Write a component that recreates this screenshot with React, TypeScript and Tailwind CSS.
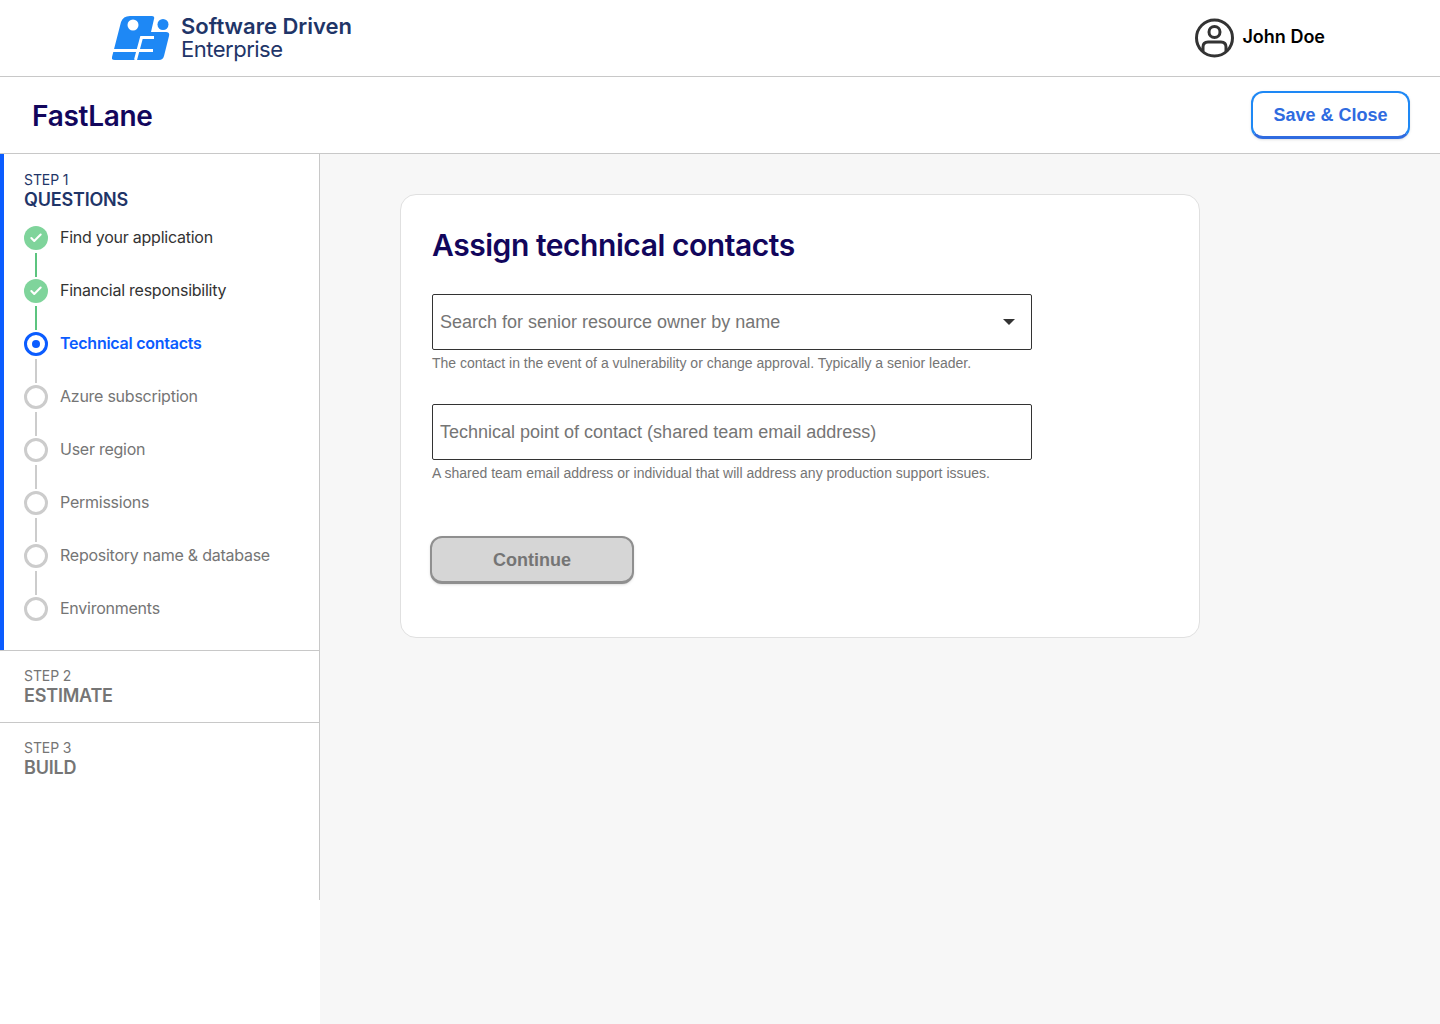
import { Check } from "lucide-react";

const questions = [
  { label: "Find your application", state: "done" },
  { label: "Financial responsibility", state: "done" },
  { label: "Technical contacts", state: "active" },
  { label: "Azure subscription", state: "todo" },
  { label: "User region", state: "todo" },
  { label: "Permissions", state: "todo" },
  { label: "Repository name & database", state: "todo" },
  { label: "Environments", state: "todo" },
];

function Logo() {
  return (
    <svg width="58" height="44" viewBox="0 0 58 44" className="shrink-0">
      <path
        d="M18 0H40Q43 0 42 3L39 16H54Q58 16 57 20L52 40Q51 44 47 44H3Q-1 44 0 41L9 6Q11 0 18 0Z"
        fill="#1e88f5"
      />
      <path
        d="M1 34.500H26L23.500 44M26 34.500L29.500 21.500H42M26 34.500H41"
        fill="none"
        stroke="#ffffff"
        strokeWidth="3"
      />
      <circle cx="21" cy="9" r="5.500" fill="#ffffff" />
      <circle cx="51" cy="8.500" r="5.500" fill="#1e88f5" />
    </svg>
  );
}

function UserIcon() {
  return (
    <svg width="39" height="40" viewBox="0 0 39 40" fill="none" stroke="#333333" strokeWidth="3">
      <circle cx="19.500" cy="20" r="18" />
      <circle cx="19.500" cy="14" r="5.500" />
      <path d="M8 33V29Q8 24 13 24H26Q31 24 31 29V33" />
    </svg>
  );
}

function StepDot({ state }: { state: string }) {
  if (state === "done") {
    return (
      <span className="flex h-6 w-6 items-center justify-center rounded-full bg-[#7fd49b]">
        <Check className="h-3.5 w-3.5 text-white" strokeWidth={3.5} />
      </span>
    );
  }
  if (state === "active") {
    return (
      <span className="flex h-6 w-6 items-center justify-center rounded-full border-[3px] border-[#0b5cff]">
        <span className="h-2 w-2 rounded-full bg-[#0b5cff]" />
      </span>
    );
  }
  return <span className="h-6 w-6 rounded-full border-[3px] border-[#cccccc]" />;
}

function Field({ placeholder, help, caret }: { placeholder: string; help: string; caret?: boolean }) {
  return (
    <div className="w-[600px]">
      <div className="flex h-14 w-full items-center justify-between rounded-[2px] border border-[#333333] pl-[7px] pr-4 font-['Liberation_Sans',sans-serif] text-lg text-[#757575]">
        <span>{placeholder}</span>
        {caret && <span className="h-0 w-0 border-x-[6px] border-t-[6px] border-x-transparent border-t-[#333333]" />}
      </div>
      <p className="mt-[4px] h-[18px] font-['Liberation_Sans',sans-serif] text-sm leading-[18px] text-[#757575]">{help}</p>
    </div>
  );
}

export default function App() {
  return (
    <div className="flex min-h-[1024px] flex-col bg-white font-['Inter',sans-serif]">
      {/* top bar */}
      <header className="flex h-[77px] shrink-0 items-center justify-between border-b border-[#c8c8c8] pl-[112px] pr-[115px]">
        <div className="flex items-center gap-[11px]">
          <Logo />
          <div className="-mt-[2px] text-[#1f3568]">
            <div className="text-[22px] leading-[23px] font-semibold">Software Driven</div>
            <div className="text-[22px] leading-[22px] tracking-[-0.5px]">Enterprise</div>
          </div>
        </div>
        <div className="flex items-center gap-2">
          <UserIcon />
          <span className="-mt-[2px] text-lg font-semibold text-black">John Doe</span>
        </div>
      </header>

      {/* title bar */}
      <div className="flex h-[77px] shrink-0 items-center justify-between border-b border-[#c8c8c8] pl-8 pr-[30px]">
        <h1 className="mt-[2px] text-[28px] font-semibold tracking-[-0.3px] text-[#12065c]">FastLane</h1>
        <button className="h-12 w-[159px] rounded-xl border-2 border-[#1e88f5] border-b-[3px] border-b-[#2f6be0] bg-white font-['Liberation_Sans',sans-serif] text-lg font-bold text-[#2f6be0] shadow-sm">
          Save &amp; Close
        </button>
      </div>

      <div className="flex flex-1">
        {/* sidebar */}
        <aside className="w-[320px] shrink-0 self-start">
          <div className="h-[746px] border-r border-[#c8c8c8]">
            <div className="h-[497px] border-b border-[#c8c8c8]">
              <div className="h-[496px] border-l-4 border-[#0b5cff] pl-5 pt-[18px]">
                <div className="text-sm leading-[16px] tracking-[-0.1px] text-[#1f3568]">STEP 1</div>
                <div className="text-lg leading-[24px] font-semibold tracking-[-0.2px] text-[#1f3568]">QUESTIONS</div>
                <ul className="mt-[14px]">
                  {questions.map((q, i) => (
                    <li key={q.label} className="flex gap-3">
                      <div className="flex w-6 flex-col items-center">
                        <StepDot state={q.state} />
                        {i < questions.length - 1 && (
                          <span className={`mb-[2px] mt-[3px] h-[24px] w-[2px] ${q.state === "done" ? "bg-[#5cc47f]" : "bg-[#cccccc]"}`} />
                        )}
                      </div>
                      <span
                        className={`-mt-px text-base leading-6 tracking-[-0.25px] ${
                          q.state === "active"
                            ? "font-semibold text-[#0b5cff]"
                            : q.state === "done"
                              ? "text-[#333333]"
                              : "text-[#757575]"
                        }`}
                      >
                        {q.label}
                      </span>
                    </li>
                  ))}
                </ul>
              </div>
            </div>
            <div className="h-[72px] border-b border-[#c8c8c8] pl-6 pt-[17px] text-[#757575]">
              <div className="text-sm leading-[16px] tracking-[-0.1px]">STEP 2</div>
              <div className="text-lg leading-[24px] font-semibold tracking-[-0.2px]">ESTIMATE</div>
            </div>
            <div className="pl-6 pt-[17px] text-[#757575]">
              <div className="text-sm leading-[16px] tracking-[-0.1px]">STEP 3</div>
              <div className="text-lg leading-[24px] font-semibold tracking-[-0.2px]">BUILD</div>
            </div>
          </div>
        </aside>

        {/* main */}
        <main className="flex-1 bg-[#f7f7f7] pl-20 pt-10">
          <section className="h-[444px] w-[800px] rounded-2xl border border-[#e0e0e0] bg-white pl-[31px] pt-[30px]">
            <h2 className="text-[30px] leading-10 font-semibold tracking-[-0.45px] text-[#12065c]">Assign technical contacts</h2>
            <div className="mt-[29px] flex flex-col gap-[32px]">
              <Field
                caret
                placeholder="Search for senior resource owner by name"
                help="The contact in the event of a vulnerability or change approval. Typically a senior leader."
              />
              <Field
                placeholder="Technical point of contact (shared team email address)"
                help="A shared team email address or individual that will address any production support issues."
              />
            </div>
            <button className="mt-[54px] -ml-0.5 h-12 w-[204px] rounded-xl border-2 border-b-[3px] border-[#8f8f8f] bg-[#d6d6d6] font-['Liberation_Sans',sans-serif] text-lg font-bold text-[#757575] shadow-sm">
              Continue
            </button>
          </section>
        </main>
      </div>
    </div>
  );
}
